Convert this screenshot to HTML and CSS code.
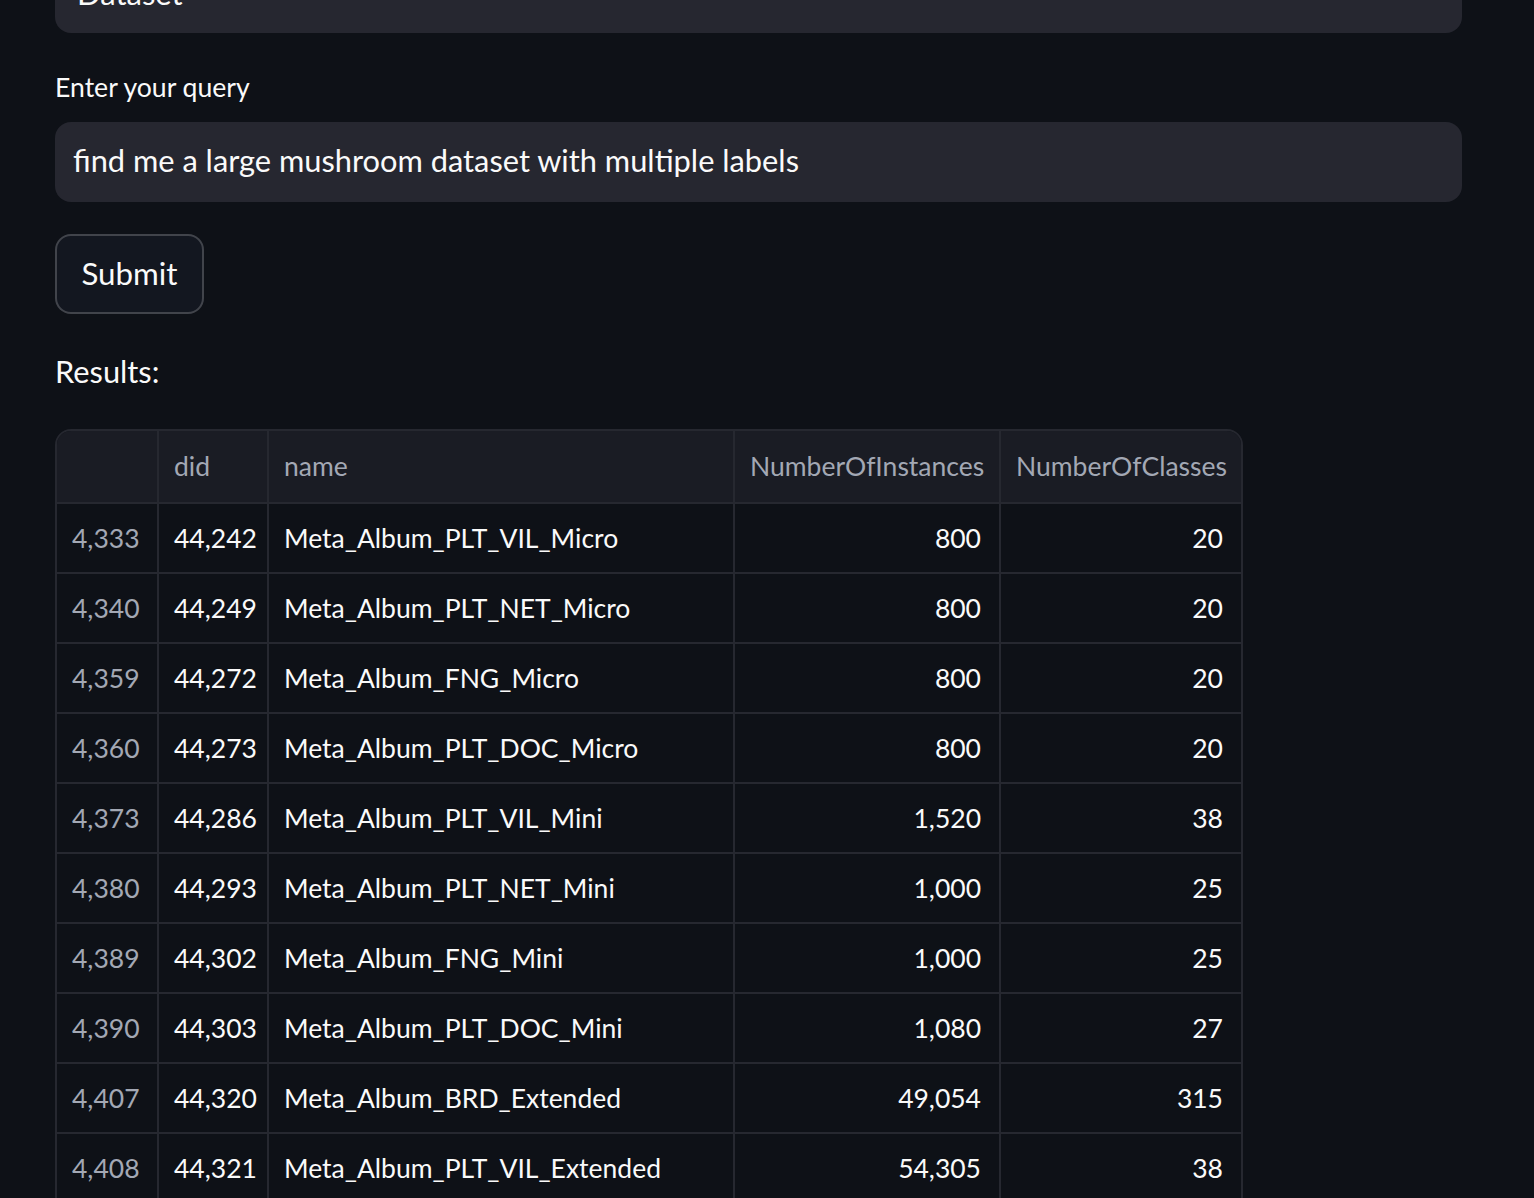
FILE: index.html
```html
<!DOCTYPE html>
<html lang="en">
<head>
<meta charset="utf-8">
<title>Dataset search</title>
<link rel="stylesheet" href="styles.css">
</head>
<body>
<main class="main">
  <div class="select-box"><span class="select-value">Dataset</span></div>

  <div class="field">
    <label class="label" for="q">Enter your query</label>
    <div class="text-input" id="q">find me a large mushroom dataset with multiple labels</div>
  </div>

  <div class="button-row">
    <button class="btn" type="button">Submit</button>
  </div>

  <p class="results">Results:</p>

  <div class="table-wrap">
    <table class="grid">
      <colgroup>
        <col class="c-idx"><col class="c-did"><col class="c-name"><col class="c-inst"><col class="c-cls">
      </colgroup>
      <thead>
        <tr><th></th><th>did</th><th>name</th><th>NumberOfInstances</th><th>NumberOfClasses</th></tr>
      </thead>
      <tbody>
        <tr><td class="idx">4,333</td><td>44,242</td><td>Meta_Album_PLT_VIL_Micro</td><td class="num">800</td><td class="num">20</td></tr>
        <tr><td class="idx">4,340</td><td>44,249</td><td>Meta_Album_PLT_NET_Micro</td><td class="num">800</td><td class="num">20</td></tr>
        <tr><td class="idx">4,359</td><td>44,272</td><td>Meta_Album_FNG_Micro</td><td class="num">800</td><td class="num">20</td></tr>
        <tr><td class="idx">4,360</td><td>44,273</td><td>Meta_Album_PLT_DOC_Micro</td><td class="num">800</td><td class="num">20</td></tr>
        <tr><td class="idx">4,373</td><td>44,286</td><td>Meta_Album_PLT_VIL_Mini</td><td class="num">1,520</td><td class="num">38</td></tr>
        <tr><td class="idx">4,380</td><td>44,293</td><td>Meta_Album_PLT_NET_Mini</td><td class="num">1,000</td><td class="num">25</td></tr>
        <tr><td class="idx">4,389</td><td>44,302</td><td>Meta_Album_FNG_Mini</td><td class="num">1,000</td><td class="num">25</td></tr>
        <tr><td class="idx">4,390</td><td>44,303</td><td>Meta_Album_PLT_DOC_Mini</td><td class="num">1,080</td><td class="num">27</td></tr>
        <tr><td class="idx">4,407</td><td>44,320</td><td>Meta_Album_BRD_Extended</td><td class="num">49,054</td><td class="num">315</td></tr>
        <tr><td class="idx">4,408</td><td>44,321</td><td>Meta_Album_PLT_VIL_Extended</td><td class="num">54,305</td><td class="num">38</td></tr>
      </tbody>
    </table>
  </div>
</main>
</body>
</html>
```

FILE: styles.css
```css
*, *::before, *::after {
  box-sizing: border-box;
}

html, body {
  margin: 0;
  padding: 0;
  background: #0e1117;
  color: #fafafa;
  font-family: "Lato", "Noto Sans", sans-serif;
  overflow: hidden;
  height: 1198px;
}

.main {
  margin: -47px 72px 0 55px;
  display: flex;
  flex-direction: column;
  gap: 32px;
}

.select-box {
  height: 80px;
  background: #262730;
  border-radius: 16px;
  display: flex;
  align-items: center;
  padding-left: 22px;
  font-size: 31px;
}

.field {
  display: flex;
  flex-direction: column;
}

.label {
  font-size: 26.6px;
  line-height: 45px;
  margin-bottom: 12px;
}

.text-input {
  height: 80px;
  background: #262730;
  border-radius: 16px;
  display: flex;
  align-items: center;
  padding: 0 0 4px 18px;
  font-size: 30.8px;
}

.button-row {
  display: flex;
}

.btn {
  height: 80px;
  width: 149px;
  background: #131720;
  border: 2px solid rgba(250, 250, 250, 0.2);
  border-radius: 16px;
  color: #fafafa;
  font-family: inherit;
  font-size: 31.3px;
  padding: 0 0 2px 0;
}

.results {
  margin: 0;
  font-size: 30.8px;
  line-height: 51px;
}

.table-wrap {
  width: 1188px;
  border: 2px solid #262830;
  border-radius: 16px 16px 0 0;
  overflow: hidden;
}

.grid {
  border-collapse: collapse;
  width: 100%;
  table-layout: fixed;
  font-size: 26.5px;
}

.c-idx { width: 101px; }
.c-did { width: 110px; }
.c-name { width: 466px; }
.c-inst { width: 266px; }
.c-cls { width: 241px; }

.grid th, .grid td {
  border-left: 2px solid #262830;
  border-bottom: 2px solid #262830;
  padding: 0 14px 1px 15px;
  white-space: nowrap;
  text-align: left;
  font-weight: normal;
}

.grid th:first-child, .grid td:first-child {
  border-left: none;
}

.grid thead th {
  height: 72px;
  background: #1a1c24;
  color: #a3a8b4;
}

.grid tbody td {
  height: 70px;
  color: #fafafa;
}

.grid td.num, .grid td.idx {
  text-align: right;
  padding-right: 18px;
}

.grid td.idx {
  color: #a3a8b4;
}
```
